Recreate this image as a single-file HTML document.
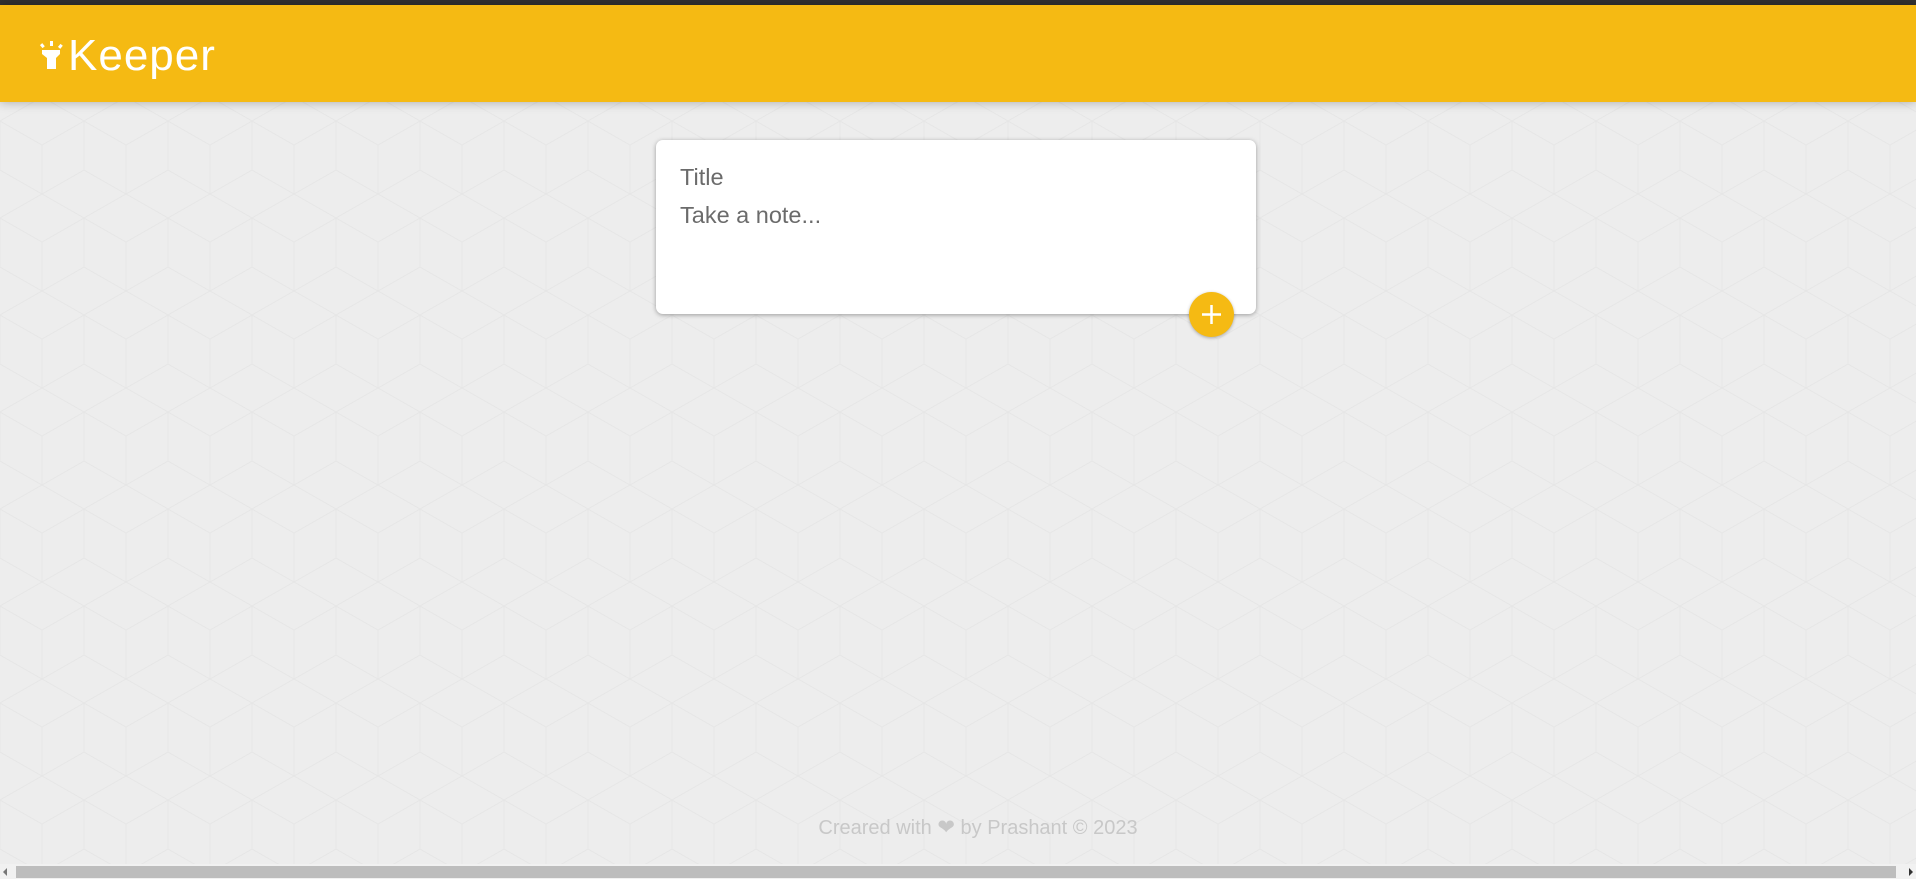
<!DOCTYPE html>
<html><head><meta charset="utf-8"><style>
html,body{margin:0;padding:0;width:1916px;height:879px;overflow:hidden;background:#ededed;font-family:"Liberation Sans",sans-serif;}
.top{position:absolute;left:0;top:0;width:1916px;height:5px;background:#323232;}
header{position:absolute;left:0;top:5px;width:1916px;height:97px;background:#f5ba13;box-shadow:0 0 10px rgba(0,0,0,0.3);}
.logo{position:absolute;left:68px;top:26px;color:#fff;font-size:44px;letter-spacing:1px;font-family:"Liberation Sans",sans-serif;}
.card{position:absolute;left:656px;top:140px;width:600px;height:174px;background:#fff;border-radius:7px;box-shadow:0 1px 5px rgba(0,0,0,0.35);}
.t{position:absolute;left:24px;font-size:23.5px;color:#6b6b6b;}
.fab{position:absolute;left:1189px;top:292px;width:45px;height:45px;border-radius:50%;background:#f5ba13;box-shadow:0 1px 3px rgba(0,0,0,0.3);}
.foot{position:absolute;left:0;width:1876px;padding-left:40px;top:815px;text-align:center;font-size:20px;color:#c8c8c8;}
.sb{position:absolute;left:0;top:864px;width:1916px;height:15px;background:#f1f1f1;}
.thumb{position:absolute;left:16px;top:2px;width:1880px;height:12px;background:#bdbdbd;}
</style></head><body>
<svg width="1916" height="879" style="position:absolute;left:0;top:0">
<defs><pattern id="p" width="84" height="97" patternUnits="userSpaceOnUse">
<path d="M0 24 L42 0 L84 24 M0 24 L0 73 M42 48 L42 97 M0 73 L42 97 L84 73 M0 24 L42 48 L84 24 M84 24 L84 73" fill="none" stroke="#e6e6e6" stroke-width="1"/></pattern></defs>
<rect x="0" y="100" width="1916" height="764" fill="url(#p)"/>
</svg>
<div class="top"></div>
<header>
<svg style="position:absolute;left:38px;top:36px" width="26" height="30" viewBox="0 0 26 30">
<rect x="12" y="0" width="3" height="5" fill="#fff"/>
<rect x="3" y="3" width="3" height="4" fill="#fff" transform="rotate(-40 4 5)"/>
<rect x="21" y="3" width="3" height="4" fill="#fff" transform="rotate(40 22 5)"/>
<path d="M4 9 H22 V13 L18 17 V28 H9 V17 L4 13 Z" fill="#fff"/>
</svg>
<div class="logo">Keeper</div>
</header>
<div class="card">
<div class="t" style="top:24px">Title</div>
<div class="t" style="top:62px">Take a note...</div>
</div>
<div class="fab"><svg width="45" height="45"><path d="M22.5 13 V32 M13 22.5 H32" stroke="#fff" stroke-width="2.5"/></svg></div>
<div class="foot">Creared with <span style="font-size:21px">&#10084;</span> by Prashant © 2023</div>
<div class="sb"><div class="thumb"></div>
<div style="position:absolute;left:3px;top:4px;width:0;height:0;border-top:4px solid transparent;border-bottom:4px solid transparent;border-right:4px solid #777"></div>
<div style="position:absolute;right:3px;top:4px;width:0;height:0;border-top:4px solid transparent;border-bottom:4px solid transparent;border-left:4px solid #333"></div>
</div>
</body></html>
